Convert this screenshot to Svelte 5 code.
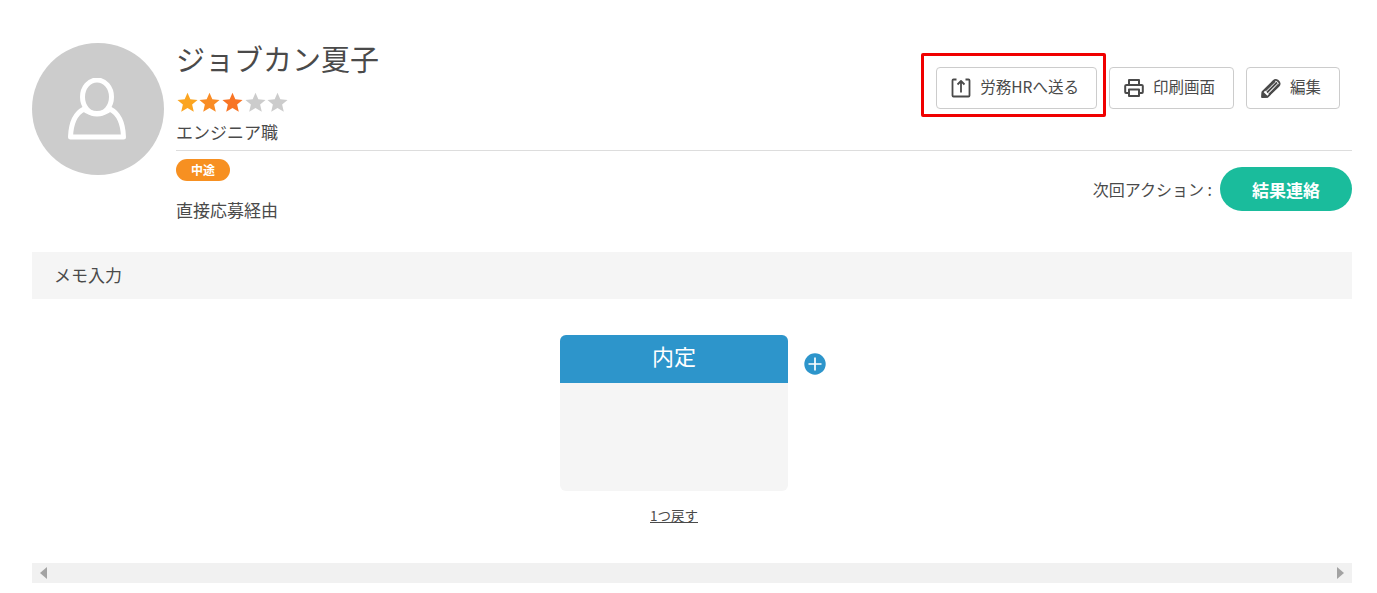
<script>
  const stars = ["#fba521", "#f98c25", "#f87424", "#cccccc", "#cccccc"];
  const starPath = "M10 0.6 L12.7 6.9 L19.6 7.5 L14.4 12 L16 18.8 L10 15.2 L4 18.8 L5.6 12 L0.4 7.5 L7.3 6.9 Z";
</script>

<div class="page">
  <header class="profile">
    <div class="avatar">
      <svg viewBox="0 0 58 62" width="58" height="62" fill="none" stroke="#fff" stroke-width="5" stroke-linejoin="round">
        <ellipse cx="29" cy="19" rx="14.5" ry="17" />
        <path d="M16 31 C8 35 3 45 2.5 59 L55.5 59 C55 45 50 35 42 31 C35 37 23 37 16 31 Z" />
      </svg>
    </div>

    <div class="info">
      <div class="top">
        <div class="who">
          <h1>ジョブカン夏子</h1>
          <div class="stars">
            {#each stars as color}
              <svg viewBox="0 0 20 20" width="21" height="21"><path d={starPath} fill={color} /></svg>
            {/each}
          </div>
          <div class="job">エンジニア職</div>
        </div>
        <div class="actions">
          <button class="btn send">
            <svg viewBox="0 0 20 20" width="20" height="20" fill="none" stroke="#4a4a4a" stroke-width="1.8" stroke-linejoin="round">
              <path d="M5.5 1.5 L2.5 1.5 Q1.5 1.5 1.5 2.5 L1.5 17.5 Q1.5 18.5 2.5 18.5 L17.5 18.5 Q18.5 18.5 18.5 17.5 L18.5 2.5 Q18.5 1.5 17.5 1.5 L14.5 1.5" />
              <path d="M10 14.5 L10 3 M6.5 6.5 L10 3 L13.5 6.5" />
            </svg>
            <span>労務HRへ送る</span>
          </button>
          <button class="btn">
            <svg viewBox="0 0 20 20" width="20" height="20" fill="none" stroke="#4a4a4a" stroke-width="2" stroke-linejoin="round">
              <path d="M5 7 L5 2 L15 2 L15 7" />
              <path d="M5 15 L2 15 Q1.2 15 1.2 14 L1.2 8 Q1.2 7 2.5 7 L17.5 7 Q18.8 7 18.8 8 L18.8 14 Q18.8 15 18 15 L15 15" />
              <path d="M5 11.5 L15 11.5 L15 18 L5 18 Z" />
            </svg>
            <span>印刷画面</span>
          </button>
          <button class="btn">
            <svg viewBox="0 0 20 20" width="20" height="20" fill="none" stroke="#4a4a4a" stroke-width="1.8" stroke-linejoin="round">
              <path d="M1.5 14 L12.5 3 Q14.5 1 16.5 2.5 L18 4 Q19.5 6 17.5 8 L6.5 18.8 L1.2 19 Z" />
              <path d="M4.2 12.5 L14 3 M6 14.5 L16 4.5 M8 16.5 L17.8 6.5" />
              <path d="M1.2 19 L1.6 14.5 L6 18.6 Z" fill="#4a4a4a" />
            </svg>
            <span>編集</span>
          </button>
        </div>
      </div>

      <div class="bottom">
        <div>
          <span class="tag">中途</span>
          <p class="source">直接応募経由</p>
        </div>
        <div class="next">
          <span class="next-label">次回アクション :</span>
          <button class="result">結果連絡</button>
        </div>
      </div>
    </div>
  </header>

  <div class="memo">メモ入力</div>

  <section class="flow">
    <div class="column">
      <div class="card">
        <div class="card-head">内定</div>
        <div class="card-body"></div>
      </div>
      <a href="#back" class="back">1つ戻す</a>
    </div>
    <svg class="plus" viewBox="0 0 22 22" width="22" height="22">
      <circle cx="11" cy="11" r="10.7" fill="#2d95cb" />
      <path d="M11 4.5 V17.5 M4.5 11 H17.5" stroke="#fff" stroke-width="1.7" />
    </svg>
  </section>

  <div class="scrollbar">
    <span class="arrow left"></span>
    <span class="arrow right"></span>
  </div>
</div>

<style>
  :global(body) {
    margin: 0;
    background: #fff;
  }
  .page {
    height: 593px;
    box-sizing: border-box;
    padding: 43px 25px 0 32px;
    font-family: "Noto Sans CJK JP", "Noto Sans", sans-serif;
    color: #4a4a4a;
    overflow: hidden;
  }
  .profile {
    display: flex;
    gap: 12px;
    height: 209px;
  }
  .avatar {
    width: 132px;
    height: 132px;
    border-radius: 50%;
    background: #cccccc;
    display: flex;
    align-items: center;
    justify-content: center;
    flex: none;
  }
  .avatar svg {
    margin-right: 2px;
  }
  .info {
    flex: 1;
  }
  .top {
    display: flex;
    justify-content: space-between;
    height: 107px;
    border-bottom: 1px solid #dddddd;
  }
  h1 {
    margin: -2px 0 0;
    font-size: 29px;
    font-weight: 400;
    line-height: 34px;
  }
  .stars {
    display: flex;
    gap: 1.7px;
    margin: 17px 0 0 0.5px;
    height: 21px;
  }
  .job {
    font-size: 17px;
    line-height: 24px;
    margin-top: 7px;
  }
  .actions {
    display: flex;
    align-items: flex-start;
    gap: 12px;
    margin-right: 12px;
    padding-top: 24px;
  }
  .btn {
    height: 42px;
    display: flex;
    align-items: center;
    gap: 9px;
    padding: 0 18px 0 14px;
    background: #fff;
    border: 1px solid #cccccc;
    border-radius: 4px;
    font: inherit;
    font-size: 15.5px;
    color: #4a4a4a;
  }
  .btn span {
    margin-bottom: 5px;
  }
  .send {
    position: relative;
    padding-right: 17px;
  }
  /* red annotation drawn over the screenshot */
  .send::after {
    content: "";
    position: absolute;
    inset: -15px -10px -9px -16px;
    border: 3px solid #f00000;
    border-radius: 2px;
  }
  .bottom {
    display: flex;
    justify-content: space-between;
    padding-top: 8px;
  }
  .tag {
    display: block;
    width: 54px;
    height: 22px;
    line-height: 22px;
    border-radius: 11px;
    background: #f79021;
    color: #fff;
    font-size: 12px;
    font-weight: 700;
    text-align: center;
  }
  .source {
    margin: 17px 0 0;
    font-size: 17px;
    line-height: 24px;
  }
  .next {
    display: flex;
    align-items: center;
    height: 44px;
    margin-top: 8px;
    font-size: 16px;
  }
  .next-label {
    margin-right: 8px;
  }
  .result {
    width: 132px;
    height: 44px;
    border: none;
    border-radius: 22px;
    background: #1abc9c;
    color: #fff;
    font: inherit;
    font-size: 17px;
    font-weight: 700;
  }
  .memo {
    height: 47px;
    line-height: 45px;
    padding-left: 22px;
    background: #f5f5f5;
    font-size: 17px;
  }
  .flow {
    display: flex;
    align-items: flex-start;
    gap: 15.5px;
    height: 264px;
    box-sizing: border-box;
    padding: 36px 0 0 528px;
  }
  .column {
    width: 228px;
    display: flex;
    flex-direction: column;
    align-items: center;
  }
  .card {
    width: 100%;
    border-radius: 6px;
    overflow: hidden;
    background: #f5f5f5;
  }
  .card-head {
    height: 48px;
    line-height: 41px;
    background: #2d95cb;
    color: #fff;
    font-size: 22px;
    text-align: center;
  }
  .card-body {
    height: 108px;
  }
  .back {
    margin-top: 15px;
    font-size: 13.5px;
    line-height: 18px;
    color: #4a4a4a;
  }
  .plus {
    margin-top: 18px;
  }
  .scrollbar {
    height: 20px;
    background: #f1f1f1;
    display: flex;
    justify-content: space-between;
    align-items: center;
    padding: 0 8px;
  }
  .arrow {
    width: 0;
    height: 0;
    border-top: 6px solid transparent;
    border-bottom: 6px solid transparent;
  }
  .arrow.left {
    border-right: 7px solid #a3a3a3;
  }
  .arrow.right {
    border-left: 7px solid #a3a3a3;
  }
</style>
